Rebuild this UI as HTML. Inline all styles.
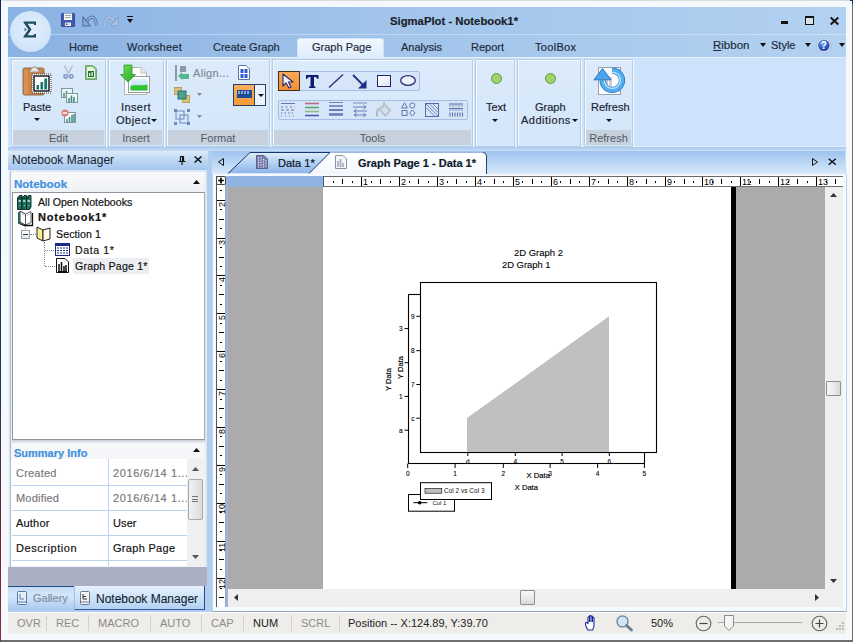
<!DOCTYPE html>
<html><head><meta charset="utf-8">
<style>
*{margin:0;padding:0;box-sizing:border-box}
html,body{width:853px;height:642px;overflow:hidden;background:#6f6f72}
body{position:relative;font-family:"Liberation Sans",sans-serif;font-size:11px;color:#1e2a3a}
.a{position:absolute}
.t{position:absolute;white-space:nowrap;line-height:1;-webkit-text-stroke:0.18px currentColor}
svg{position:absolute;overflow:visible}
#frame{left:1px;top:1px;width:851px;height:639px;background:#f5f8fc}
#title{left:8px;top:7px;width:838px;height:50px;background:linear-gradient(90deg,#8ab2e2 0%,#a2c4eb 45%,#abcbee 75%,#b3d1f1 100%)}
#ribbon{left:8px;top:57px;width:838px;height:90px;background:#cce3fb;border-top:1px solid #e4f0fc;border-bottom:1px solid #e4f0fc}
.grp{position:absolute;top:59px;height:88px;background:linear-gradient(#dcebfb,#d3e6fa);border:1px solid #b6cde8;box-shadow:inset 1px 1px 0 #f4f9ff,1px 1px 0 #f2f8fe}
.glab{position:absolute;left:1px;right:1px;bottom:1px;height:15px;background:#c6d1dd;color:#4f5963;font-size:11px;text-align:center;line-height:17px}
.bt{position:absolute;white-space:nowrap;line-height:1;font-size:11px;color:#1b2533;-webkit-text-stroke:0.18px currentColor}
#left{left:8px;top:147px;width:205px;height:465px;background:#b3cdee}
#doc{left:212px;top:151px;width:634px;height:460px;background:#c8daf0}
#status{left:8px;top:612px;width:838px;height:22px;background:#efedea;border-top:1px solid #fbfbfb}
.sl{position:absolute;top:615px;width:1px;height:16px;background:#d3d1cd}
.st{position:absolute;top:618px;font-size:11px;color:#8a8a8a;white-space:nowrap;line-height:1}
</style></head><body>
<div class="a" style="left:0;top:0;width:853px;height:1px;background:#d9dadd"></div>
<div class="a" style="left:0;top:0;width:1px;height:642px;background:linear-gradient(#0f2a50,#12365e 40%,#163b5a 60%,#7a2233 85%,#8a2a35)"></div>
<div class="a" style="left:850px;top:0;width:3px;height:4px;background:#1a3560"></div>
<div class="a" id="frame"></div>
<div class="a" id="title"></div>
<div class="a" style="left:8px;top:34px;width:838px;height:1px;background:rgba(255,255,255,.35)"></div>

<!-- Sigma orb -->
<div class="a" style="left:10px;top:11px;width:41px;height:41px;border-radius:50%;background:radial-gradient(circle at 50% 45%,#e3effc 0%,#d3e6fa 60%,#c3dbf5 100%)"></div>
<svg style="left:23px;top:21px" width="14" height="17" viewBox="0 0 14 17"><path d="M0.5 0.5 H13 V4 H11 V2.8 H4.5 L8.5 8.5 L4.5 14.2 H11 V13 H13 V16.5 H0.5 V15.5 L5.5 8.5 L0.5 1.5Z" fill="#1e4d5a"/><path d="M1.5 6.5 L4.2 8.5 L1.5 10.5Z" fill="#3a8aa0"/></svg>

<!-- QAT -->
<svg style="left:61px;top:13px" width="14" height="14" viewBox="0 0 14 14"><rect x="0" y="0" width="14" height="14" rx="1.5" fill="#3a4a9e"/><rect x="1" y="0.5" width="12" height="13" rx="1" fill="#4558b0"/><rect x="3" y="0.5" width="8" height="6.5" fill="#f6f6f6"/><path d="M4 2.5 H10 M4 4.5 H10" stroke="#9aa"/><rect x="4" y="9.5" width="6" height="3.5" fill="#e9ecf4"/><rect x="5" y="10.5" width="1.5" height="1.5" fill="#445"/></svg>
<svg style="left:82px;top:14px" width="16" height="13" viewBox="0 0 16 13"><path d="M4.5 8.5 C7 1.5,13.5 0,14.5 11.5" fill="none" stroke="#5878ae" stroke-width="3.2"/><path d="M4.5 8.5 C7 1.5,13.5 0,14.5 11.5" fill="none" stroke="#9fb8dc" stroke-width="1.2"/><path d="M0.8 3 L0.8 11.8 L8.5 11.8Z" fill="#8faad4" stroke="#5878ae" stroke-width="1.2" stroke-linejoin="round"/></svg>
<svg style="left:103px;top:14px" width="16" height="13" viewBox="0 0 16 13"><path d="M11.5 8.5 C9 1.5,2.5 0,1.5 11.5" fill="none" stroke="#8aa6d0" stroke-width="3.2"/><path d="M11.5 8.5 C9 1.5,2.5 0,1.5 11.5" fill="none" stroke="#b5cbe8" stroke-width="1.2"/><path d="M15.2 3 L15.2 11.8 L7.5 11.8Z" fill="#adc3e3" stroke="#8aa6d0" stroke-width="1.2" stroke-linejoin="round"/></svg>
<svg style="left:127px;top:16px" width="6" height="7" viewBox="0 0 6 7"><rect x="0" y="0" width="6" height="1" fill="#111"/><path d="M0 3 L6 3 L3 7 Z" fill="#111"/></svg>

<div class="t" style="left:390px;top:16px;font-weight:bold;font-size:11.3px;color:#1a1f2a">SigmaPlot - Notebook1*</div>

<!-- window buttons -->
<div class="a" style="left:781px;top:21px;width:7px;height:3px;background:#111"></div>
<div class="a" style="left:805px;top:16px;width:9px;height:9px;border:1px solid #111;border-top-width:2px;background:#d9e2ea"></div>
<svg style="left:830px;top:17px" width="9" height="8" viewBox="0 0 9 8"><path d="M0.7 0.5 L8.3 7.5 M8.3 0.5 L0.7 7.5" stroke="#111" stroke-width="1.9"/></svg>

<!-- tabs -->
<div class="a" style="left:297px;top:38px;width:87px;height:20px;background:linear-gradient(#f1f8fe,#dcecfc);border:1px solid #cfe2f6;border-bottom:none;border-radius:3px 3px 0 0"></div>
<div class="t" style="left:69px;top:42px">Home</div>
<div class="t" style="left:127px;top:42px;letter-spacing:0.3px">Worksheet</div>
<div class="t" style="left:213px;top:42px">Create Graph</div>
<div class="t" style="left:312px;top:42px">Graph Page</div>
<div class="t" style="left:401px;top:42px">Analysis</div>
<div class="t" style="left:471px;top:42px">Report</div>
<div class="t" style="left:535px;top:42px;letter-spacing:0.3px">ToolBox</div>
<div class="t" style="left:713px;top:40px;font-size:11.5px;"><u>R</u>ibbon</div>
<svg style="left:760px;top:43px" width="6" height="4"><path d="M0 0 L6 0 L3 4Z" fill="#111"/></svg>
<div class="t" style="left:771px;top:40px;font-size:11px;">Style</div>
<svg style="left:805px;top:43px" width="6" height="4"><path d="M0 0 L6 0 L3 4Z" fill="#111"/></svg>
<svg style="left:816px;top:38px" width="16" height="16" viewBox="0 0 16 16"><defs><radialGradient id="hg" cx="0.4" cy="0.3" r="0.7"><stop offset="0" stop-color="#7fb0f0"/><stop offset="0.6" stop-color="#2f62c8"/><stop offset="1" stop-color="#1d3f9a"/></radialGradient></defs><circle cx="7.8" cy="7.3" r="7.2" fill="#e8f0fa" stroke="#9fb3d0" stroke-width="0.8"/><circle cx="7.8" cy="7.3" r="5.8" fill="url(#hg)"/><text x="7.8" y="11" font-family="Liberation Sans" font-weight="bold" font-size="10" fill="#fff" text-anchor="middle">?</text></svg>
<svg style="left:839px;top:43px" width="6" height="4"><path d="M0 0 L6 0 L3 4Z" fill="#111"/></svg>

<div class="a" id="ribbon"></div>
<!-- Edit group -->
<div class="grp" style="left:11px;width:95px"><div class="glab">Edit</div></div>
<svg style="left:22px;top:66px" width="30" height="30" viewBox="0 0 30 30">
<rect x="1" y="2" width="21" height="27" rx="1.5" fill="#cd8445" stroke="#8d6a52"/>
<rect x="2" y="4" width="4" height="24" fill="#de9a5a" opacity="0.6"/>
<path d="M7 6 L11 1 L14 1 L18 6Z" fill="#e9e6e2" stroke="#9a8f88"/>
<rect x="10" y="8" width="19" height="19" fill="#fff" stroke="#333" stroke-dasharray="1 1"/>
<rect x="12" y="10" width="15" height="15" fill="#fff" stroke="#111" stroke-width="1.4"/>
<rect x="14.5" y="19" width="2.5" height="4.5" fill="#17776c"/><rect x="18.5" y="16" width="2.6" height="7.5" fill="#17776c"/><rect x="22.3" y="12.5" width="2.8" height="11" fill="#17776c"/>
</svg>
<div class="bt" style="left:23px;top:102px">Paste</div>
<svg style="left:34px;top:118px" width="6" height="3"><path d="M0 0 L6 0 L3 3Z" fill="#111"/></svg>
<svg style="left:62px;top:65px" width="13" height="15" viewBox="0 0 13 15"><path d="M2.5 0.5 L6.5 8.5 M10.5 0.5 L6.5 8.5" stroke="#b4bfd6" stroke-width="1.6"/><circle cx="3.8" cy="11.3" r="2.6" fill="#8c9dcc"/><circle cx="9.2" cy="11.3" r="2.6" fill="#8c9dcc"/><circle cx="3.8" cy="11.3" r="1" fill="#c9d3ec"/><circle cx="9.2" cy="11.3" r="1" fill="#c9d3ec"/></svg>
<svg style="left:85px;top:65px" width="12" height="15" viewBox="0 0 12 15"><path d="M0.5 0.5 L8 0.5 L11.5 4 L11.5 14.5 L0.5 14.5Z" fill="#7fc47a" stroke="#2f7a33" stroke-dasharray="1 1"/><path d="M2 2 L7.5 2 L10 4.5 L10 13 L2 13Z" fill="#e6f4e0"/><rect x="3" y="6" width="6" height="6" fill="#2f6a3f"/><rect x="4" y="8" width="1.3" height="3" fill="#dfe"/><rect x="6.5" y="7" width="1.3" height="4" fill="#dfe"/></svg>
<svg style="left:61px;top:88px" width="17" height="15" viewBox="0 0 17 15"><rect x="0.5" y="0.5" width="11" height="9" fill="#e8f2fa" stroke="#7c9a98"/><path d="M3 9 V5 M5.5 9 V3 M8 9 V6" stroke="#4e8f88" stroke-width="1.5"/><rect x="5.5" y="5.5" width="11" height="9" fill="#f4f9fd" stroke="#7c9a98"/><path d="M8 14 V10 M10.5 14 V7.5 M13 14 V9" stroke="#3f8a82" stroke-width="1.6"/></svg>
<svg style="left:61px;top:109px" width="15" height="14" viewBox="0 0 15 14"><rect x="3.5" y="3.5" width="11" height="10" fill="#f4f9fd" stroke="#7c9a98"/><path d="M6 13 V10 M8.5 13 V8 M11 13 V6 M13 13 V5" stroke="#3f8a82" stroke-width="1.5"/><circle cx="4" cy="4" r="3.6" fill="#e07b7b"/><rect x="1.8" y="3.3" width="4.4" height="1.5" fill="#fff"/></svg>

<!-- Insert group -->
<div class="grp" style="left:108px;width:56px"><div class="glab">Insert</div></div>
<svg style="left:120px;top:64px" width="31" height="31" viewBox="0 0 31 31">
<defs><linearGradient id="sky" x1="0" y1="0" x2="0" y2="1"><stop offset="0" stop-color="#e4f4fc"/><stop offset="1" stop-color="#a9daf2"/></linearGradient><linearGradient id="arr" x1="0" y1="0" x2="1" y2="1"><stop offset="0" stop-color="#6ee05a"/><stop offset="1" stop-color="#28a82a"/></linearGradient></defs>
<path d="M4.5 3.5 L21 3.5 L26.5 9 L26.5 30.5 L4.5 30.5Z" fill="#fbfbfb" stroke="#b5b5b5"/>
<path d="M21 3.5 L21 9 L26.5 9" fill="#e8e8e8" stroke="#c5c5c5"/>
<rect x="8.5" y="12.5" width="21" height="16" fill="#fff" stroke="#9c9c9c"/>
<rect x="10.5" y="14.5" width="17" height="12" fill="url(#sky)"/>
<path d="M10.5 22 C15 20.5,22 22,27.5 20.5 L27.5 26.5 L10.5 26.5Z" fill="#2fc432"/>
<path d="M4 1 L12 1 L12 10.5 L15.5 10.5 L8 18 L0.5 10.5 L4 10.5Z" fill="url(#arr)" stroke="#2f9a27" stroke-width="0.8"/>
</svg>
<div class="bt" style="left:121px;top:102px;letter-spacing:0.4px">Insert</div>
<div class="bt" style="left:116px;top:115px;letter-spacing:0.5px">Object</div>
<svg style="left:151px;top:119px" width="5" height="3"><path d="M0 0 L6 0 L3 3Z" fill="#111"/></svg>

<!-- Format group -->
<div class="grp" style="left:166px;width:104px"><div class="glab">Format</div></div>
<svg style="left:175px;top:65px" width="15" height="16" viewBox="0 0 15 16"><path d="M1 0 L1 16" stroke="#6a7f90" stroke-width="1.5"/><rect x="5" y="1" width="6" height="6" fill="#8a98a8"/><path d="M3 11 L7 7 L7 9 L14 9 L14 14 L7 14 L7 15Z" fill="#55b78b"/></svg>
<div class="bt" style="left:193px;top:68px;color:#7f8a97;letter-spacing:0.3px">Align...</div>
<svg style="left:238px;top:65px" width="12" height="15" viewBox="0 0 12 15"><path d="M0.5 0.5 L8 0.5 L11.5 4 L11.5 14.5 L0.5 14.5Z" fill="#fff" stroke="#5a6fa8"/><rect x="2.5" y="4" width="3" height="4" fill="#2f5bd0"/><rect x="6.5" y="4" width="3" height="4" fill="#2f5bd0"/><rect x="2.5" y="9" width="3" height="4" fill="#2f5bd0"/><rect x="6.5" y="9" width="3" height="4" fill="#2f5bd0"/></svg>
<svg style="left:174px;top:87px" width="16" height="16" viewBox="0 0 16 16"><rect x="0.5" y="0.5" width="7" height="7" fill="#d9c47a" stroke="#b5a35a"/><rect x="8.5" y="8.5" width="7" height="7" fill="#d9c47a" stroke="#b5a35a"/><rect x="4" y="4" width="8" height="8" fill="#4f9f8f" stroke="#2f6f6f"/></svg>
<svg style="left:197px;top:93px" width="5" height="3"><path d="M0 0 L5 0 L2.5 3Z" fill="#7d8a9a"/></svg>
<svg style="left:174px;top:109px" width="16" height="16" viewBox="0 0 16 16"><rect x="2" y="2" width="8" height="8" fill="none" stroke="#6f86b8"/><rect x="6" y="6" width="8" height="8" fill="none" stroke="#6f86b8"/><rect x="0" y="0" width="3" height="3" fill="#6f86b8"/><rect x="13" y="0" width="3" height="3" fill="#6f86b8"/><rect x="0" y="13" width="3" height="3" fill="#6f86b8"/><rect x="13" y="13" width="3" height="3" fill="#6f86b8"/></svg>
<svg style="left:197px;top:115px" width="5" height="3"><path d="M0 0 L5 0 L2.5 3Z" fill="#7d8a9a"/></svg>
<div class="a" style="left:233px;top:84px;width:33px;height:22px;border:1px solid #2e3f66;background:#eaf2fb"></div>
<div class="a" style="left:234px;top:85px;width:21px;height:20px;background:linear-gradient(#f7b060,#f59a3a);border-right:1px solid #2e3f66"></div>
<svg style="left:237px;top:90px" width="15" height="9" viewBox="0 0 15 9"><rect x="0" y="0" width="15" height="8" fill="#1b4d9a"/><path d="M2 1 L2 4 M5 1 L5 4 M8 1 L8 4 M11 1 L11 4" stroke="#fff" stroke-width="1"/></svg>
<svg style="left:258px;top:94px" width="6" height="3"><path d="M0 0 L6 0 L3 3Z" fill="#111"/></svg>

<!-- Tools group -->
<div class="grp" style="left:272px;width:201px"><div class="glab">Tools</div></div>
<div class="a" style="left:278px;top:71px;width:142px;height:20px;border:1px solid #a5bde0;border-radius:2px;background:#d6e6f8"></div>
<div class="a" style="left:278px;top:71px;width:22px;height:20px;border:1px solid #3a3020;background:linear-gradient(#f7a958,#f59032)"></div>
<svg style="left:282px;top:73px" width="13" height="16" viewBox="0 0 13 16"><path d="M1 1 L1 13 L4 10 L7 15 L9 14 L6.5 9 L11 9Z" fill="#f4f4ff" stroke="#2a2f7a" stroke-width="1.2" stroke-linejoin="round"/></svg>
<svg style="left:306px;top:75px" width="13" height="13" viewBox="0 0 13 13"><path d="M0 0 H12.5 V4 H11.5 Q11 2,9 2 H8 V11 Q8 11.8,9.5 11.8 V13 H3 V11.8 Q4.5 11.8,4.5 11 V2 H3.5 Q1.5 2,1 4 H0Z" fill="#0f1c70"/></svg>
<svg style="left:328px;top:74px" width="16" height="14" viewBox="0 0 16 14"><path d="M1 13.5 L15 0.5" stroke="#2a3b7a" stroke-width="1.5"/></svg>
<svg style="left:352px;top:74px" width="15" height="15" viewBox="0 0 15 15"><path d="M1 1 L12 12" stroke="#1f2f8a" stroke-width="1.8"/><path d="M14.5 6 L14.5 14.5 L6 14.5Z" fill="#1f2f8a"/></svg>
<div class="a" style="left:377px;top:75px;width:14px;height:12px;border:1.5px solid #1e2a6a;background:linear-gradient(135deg,#fff,#dfe3f0)"></div>
<svg style="left:400px;top:75px" width="16" height="11" viewBox="0 0 16 11"><ellipse cx="8" cy="5.5" rx="7.3" ry="4.8" fill="#eef0fb" stroke="#2a3070" stroke-width="1.3"/></svg>

<div class="a" style="left:278px;top:100px;width:190px;height:20px;border:1px solid #a5bde0;border-radius:2px;background:#d6e6f8"></div>
<svg style="left:281px;top:102px" width="14" height="15" viewBox="0 0 14 15"><path d="M0 1.5 H14" stroke="#5a6aa8" stroke-width="0.9"/><path d="M0 5 H14" stroke="#5a6aa8" stroke-width="0.9" stroke-dasharray="2 2.5"/><path d="M0 8 H14" stroke="#5a6aa8" stroke-width="0.9" stroke-dasharray="3 2"/><path d="M0 11 H14" stroke="#5a6aa8" stroke-width="0.9" stroke-dasharray="1.5 2"/><path d="M0 14 H14" stroke="#5a6aa8" stroke-width="0.9" stroke-dasharray="1 3"/></svg>
<svg style="left:305px;top:102px" width="14" height="15" viewBox="0 0 14 15"><path d="M0 1.5 H14" stroke="#b86a80" stroke-width="1.6"/><path d="M0 5.5 H14" stroke="#5da86a" stroke-width="1.6"/><path d="M0 9.5 H14" stroke="#8cc088" stroke-width="1.6"/><path d="M0 13.5 H14" stroke="#4a5ab0" stroke-width="1.6"/></svg>
<svg style="left:329px;top:102px" width="14" height="15" viewBox="0 0 14 15"><path d="M0 0.5 H14" stroke="#5a6aa8" stroke-width="0.8"/><path d="M0 4 H14" stroke="#6c7cbc" stroke-width="1.6"/><path d="M0 8 H14" stroke="#6c7cbc" stroke-width="2"/><path d="M0 12.5 H14" stroke="#6c7cbc" stroke-width="2.6"/></svg>
<svg style="left:353px;top:102px" width="14" height="15" viewBox="0 0 14 15"><path d="M0 1 H14" stroke="#6070b0" stroke-width="0.8"/><path d="M0 5 H13 M10.5 3 L13 5 L10.5 7" stroke="#6070b0" stroke-width="0.9" fill="none"/><path d="M1 9 H14 M3.5 7 L1 9 L3.5 11" stroke="#6070b0" stroke-width="0.9" fill="none"/><path d="M1 13 H13 M3.5 11.3 L1 13 L3.5 14.7 M10.5 11.3 L13 13 L10.5 14.7" stroke="#6070b0" stroke-width="0.9" fill="none"/></svg>
<svg style="left:376px;top:101px" width="16" height="17" viewBox="0 0 16 17"><path d="M8 0.5 V6" stroke="#8fa6b8" stroke-width="1"/><path d="M2.5 8 L8.5 3 L15 9 L9.5 15.5Z" fill="#c0cbd6" stroke="#a7b4c2" stroke-width="0.9"/><path d="M5 9 L9 6 L12.5 9.5 L9.5 13Z" fill="#d8e0e8"/><path d="M2.5 8 C0.5 10,0.8 13,1.5 15.5" stroke="#a9b8c4" stroke-width="1.8" fill="none"/></svg>
<svg style="left:401px;top:102px" width="15" height="15" viewBox="0 0 15 15"><path d="M3.5 0.8 L6.3 6 L0.7 6Z" fill="none" stroke="#5a6aa8" stroke-width="0.9"/><circle cx="11.3" cy="3.5" r="2.6" fill="none" stroke="#5a6aa8" stroke-width="0.9"/><rect x="1" y="8.5" width="5" height="5" fill="none" stroke="#5a6aa8" stroke-width="0.9"/><path d="M11.3 8 L14 11 L11.3 14 L8.6 11Z" fill="none" stroke="#5a6aa8" stroke-width="0.9"/></svg>
<svg style="left:425px;top:103px" width="14" height="14" viewBox="0 0 14 14"><rect x="0.5" y="0.5" width="13" height="13" fill="none" stroke="#5a6aa8"/><path d="M1 4.5 L9.5 13 M1 1 L13 13 M4.5 1 L13 9.5 M8 1 L13 6" stroke="#6a7ab0" stroke-width="0.9"/></svg>
<svg style="left:449px;top:103px" width="14" height="14" viewBox="0 0 14 14"><path d="M0 1 H14 M0 5.5 H14" stroke="#5a6aa8" stroke-width="1"/><path d="M1 2 V3.5 M4 2 V3.5 M7 2 V3.5 M10 2 V3.5 M13 2 V3.5 M1 6.5 V8 M4 6.5 V8 M7 6.5 V8 M10 6.5 V8 M13 6.5 V8" stroke="#5a6aa8" stroke-width="0.9"/><path d="M1 9.5 V13.5 M3.5 9.5 V13.5 M6 9.5 V13.5 M8.5 9.5 V13.5 M11 9.5 V13.5 M13.5 9.5 V13.5" stroke="#6070b0" stroke-width="1.1"/></svg>

<!-- Text group -->
<div class="grp" style="left:475px;width:40px"></div>
<div class="a" style="left:491px;top:73px;width:11px;height:11px;border-radius:50%;background:#9fd36f;border:1px solid #5f9a3a"></div>
<div class="bt" style="left:486px;top:102px">Text</div>
<svg style="left:492px;top:119px" width="6" height="3"><path d="M0 0 L6 0 L3 3Z" fill="#111"/></svg>

<!-- Graph Additions group -->
<div class="grp" style="left:517px;width:64px"></div>
<div class="a" style="left:545px;top:73px;width:11px;height:11px;border-radius:50%;background:#9fd36f;border:1px solid #5f9a3a"></div>
<div class="bt" style="left:535px;top:102px">Graph</div>
<div class="bt" style="left:521px;top:115px;letter-spacing:0.5px">Additions</div>
<svg style="left:572px;top:119px" width="6" height="3"><path d="M0 0 L6 0 L3 3Z" fill="#111"/></svg>

<!-- Refresh group -->
<div class="grp" style="left:584px;width:49px"><div class="glab">Refresh</div></div>
<svg style="left:592px;top:64px" width="34" height="32" viewBox="0 0 34 32">
<rect x="6.5" y="3.5" width="22" height="27" fill="#fbfcfe" stroke="#9aa3ad"/>
<rect x="13" y="15" width="3" height="8" fill="#c9c4d4"/><rect x="17" y="13" width="3" height="10" fill="#d8c8d0"/>
<path d="M20.3 6.6 A9.7 9.7 0 1 1 10.6 16.3" fill="none" stroke="#2c78c4" stroke-width="6.2"/>
<path d="M20.3 6.6 A9.7 9.7 0 1 1 10.6 16.3" fill="none" stroke="#52aef0" stroke-width="4.6"/>
<path d="M20.3 8.2 A8.1 8.1 0 1 1 12.2 16.3" fill="none" stroke="#b8e6fb" stroke-width="1.4"/>
<path d="M10.5 4.5 L2 15.8 L19 15.8Z" fill="#4aa6ea" stroke="#2c78c4" stroke-width="1"/>
</svg>
<div class="bt" style="left:591px;top:102px">Refresh</div>
<svg style="left:606px;top:119px" width="6" height="3"><path d="M0 0 L6 0 L3 3Z" fill="#111"/></svg>
<div class="a" id="left"></div>
<div class="a" style="left:8px;top:147px;width:838px;height:4px;background:linear-gradient(#a9c9ef,#c9ddf4)"></div>
<!-- Notebook manager header -->
<div class="a" style="left:8px;top:151px;width:200px;height:19px;background:linear-gradient(#dcebfa,#b9d5f3 55%,#a4c6ef)"></div>
<div class="t" style="left:12px;top:154px;font-size:12px;color:#1a2230;-webkit-text-stroke:0">Notebook Manager</div>
<svg style="left:178px;top:156px" width="8" height="9" viewBox="0 0 8 9"><path d="M2 0.5 L6 0.5 M2.5 0.5 L2.5 5 M5.5 0.5 L5.5 5 M0.5 5.5 L7.5 5.5 M4 5.5 L4 9" stroke="#111" stroke-width="1.2"/><rect x="4" y="1" width="1.5" height="4.5" fill="#111"/></svg>
<svg style="left:194px;top:156px" width="8" height="7" viewBox="0 0 8 7"><path d="M0.6 0.5 L7.4 6.5 M7.4 0.5 L0.6 6.5" stroke="#111" stroke-width="1.6"/></svg>
<!-- panel body -->
<div class="a" style="left:8px;top:170px;width:199px;height:416px;background:#dfe7f1;border-left:1px solid #eef3f9"></div>
<div class="a" style="left:10px;top:172px;width:1px;height:395px;background:#a9bdd3"></div>
<div class="a" style="left:11px;top:172px;width:194px;height:270px;background:linear-gradient(#fafbfc,#eef1f5 20px,#f2f4f7);border-top-left-radius:3px"></div>
<div class="t" style="left:14px;top:179px;font-weight:bold;font-size:11.5px;color:#3e90dc">Notebook</div>
<svg style="left:193px;top:180px" width="7" height="4"><path d="M0 4 L7 4 L3.5 0Z" fill="#111"/></svg>
<div class="a" style="left:12px;top:192px;width:193px;height:248px;background:#fff;border:1px solid #8e959e;border-right-color:#a9afb6;border-bottom-color:#8e959e"></div>
<div class="a" style="left:12px;top:440px;width:193px;height:2px;background:linear-gradient(#c4c8ce,#e6e9ee)"></div>
<!-- tree -->
<svg style="left:17px;top:195px" width="15" height="15" viewBox="0 0 15 15"><g stroke="#0b2622" stroke-width="0.9"><path d="M0.5 3 L2.5 0.5 L5 0.5 L5 14.5 L0.5 14.5Z" fill="#1d6f62"/><path d="M5 3 L7 0.5 L9.5 0.5 L9.5 14.5 L5 14.5Z" fill="#1d6f62"/><path d="M9.5 3 L11.5 0.5 L14 0.5 L14 12 L12.5 14.5 L9.5 14.5Z" fill="#1d6f62"/></g><path d="M1.5 6 H4 M6 6 H8.5 M10.5 6 H13" stroke="#cfeee6" stroke-width="1.6"/><path d="M2.5 10.5 H3.2 M7 10.5 H7.7 M11.5 10.5 H12.2" stroke="#bfe" stroke-width="1"/><path d="M0.5 3 H12" stroke="#0b2622" stroke-width="0.8"/></svg>
<div class="t" style="left:38px;top:197px;font-size:10.6px;color:#111">All Open Notebooks</div>
<svg style="left:18px;top:210px" width="16" height="16" viewBox="0 0 16 16"><path d="M2 1 L7.5 4 L7.5 15 L2 12Z" fill="#fff" stroke="#222" stroke-width="0.9"/><path d="M7.5 4 L13 1.5 L13 12.5 L7.5 15Z" fill="#fff" stroke="#555" stroke-width="0.9"/><path d="M4 4 L6.5 5.5 M9 5.5 L12 4" stroke="#c9a0b0" stroke-width="0.8"/><path d="M0.8 2 L0.8 13 L6.5 15.5 L14.5 15.5 L14.5 3" fill="none" stroke="#111" stroke-width="1.3"/><path d="M0.8 2 L0.8 12.5 L3 13.5" fill="none" stroke="#1d6f62" stroke-width="1.6"/></svg>
<div class="t" style="left:38px;top:212px;font-size:11px;font-weight:bold;color:#111;letter-spacing:0.8px">Notebook1*</div>
<div class="a" style="left:25px;top:226px;width:1px;height:5px;border-left:1px dotted #888"></div>
<div class="a" style="left:21px;top:230px;width:9px;height:9px;border:1px solid #98a0a8;background:linear-gradient(#fff,#dfe3e8)"></div>
<div class="a" style="left:23px;top:234px;width:5px;height:1px;background:#333"></div>
<div class="a" style="left:30px;top:234px;width:6px;height:1px;border-top:1px dotted #888"></div>
<svg style="left:36px;top:226px" width="16" height="16" viewBox="0 0 16 16"><path d="M1 1 L7 4 L7 15 L1 12Z" fill="#f6ef9a" stroke="#222"/><path d="M7 4 L14 2 L14 13 L7 15Z" fill="#fffbe0" stroke="#222"/></svg>
<div class="t" style="left:56px;top:229px;font-size:10.6px;color:#111;letter-spacing:0.1px">Section 1</div>
<div class="a" style="left:44px;top:242px;width:1px;height:24px;border-left:1px dotted #888"></div>
<div class="a" style="left:45px;top:250px;width:9px;height:1px;border-top:1px dotted #888"></div>
<div class="a" style="left:45px;top:266px;width:10px;height:1px;border-top:1px dotted #888"></div>
<svg style="left:55px;top:243px" width="15" height="13" viewBox="0 0 15 13"><rect x="0.5" y="0.5" width="14" height="12" fill="#fff" stroke="#1a2a8a"/><rect x="0.5" y="0.5" width="14" height="2.5" fill="#1a2a8a"/><path d="M2 5 L13 5 M2 7.5 L13 7.5 M2 10 L13 10" stroke="#1a2a8a" stroke-width="1.2" stroke-dasharray="2 1"/></svg>
<div class="t" style="left:75px;top:245px;font-size:10.6px;color:#111;letter-spacing:0.6px">Data 1*</div>
<div class="a" style="left:73px;top:258px;width:76px;height:16px;background:#eceef2"></div>
<svg style="left:56px;top:258px" width="13" height="15" viewBox="0 0 13 15"><path d="M0.5 0.5 L9 0.5 L12.5 4 L12.5 14.5 L0.5 14.5Z" fill="#fff" stroke="#111"/><path d="M3 13 L3 6 M5.5 13 L5.5 4 M8 13 L8 8 M10 13 L10 7" stroke="#111" stroke-width="1.5"/><path d="M2 13.5 L11 13.5" stroke="#111"/></svg>
<div class="t" style="left:75px;top:261px;font-size:10.6px;color:#111;letter-spacing:0.2px">Graph Page 1*</div>

<!-- summary info -->
<div class="a" style="left:11px;top:443px;width:194px;height:124px;background:linear-gradient(#f6f7f9,#eef0f3);border-top-left-radius:3px"></div>
<div class="t" style="left:14px;top:448px;font-weight:bold;font-size:11px;color:#3e90dc">Summary Info</div>
<svg style="left:193px;top:448px" width="7" height="4"><path d="M0 4 L7 4 L3.5 0Z" fill="#111"/></svg>
<div class="a" style="left:11px;top:459px;width:176px;height:107px;background:#fff"></div>
<div class="a" style="left:108px;top:459px;width:1px;height:107px;background:#b9d4ee"></div>
<div class="a" style="left:12px;top:485px;width:175px;height:1px;background:#b9d4ee"></div>
<div class="a" style="left:12px;top:510px;width:175px;height:1px;background:#b9d4ee"></div>
<div class="a" style="left:12px;top:535px;width:175px;height:1px;background:#b9d4ee"></div>
<div class="a" style="left:12px;top:560px;width:175px;height:1px;background:#b9d4ee"></div>
<div class="t" style="left:16px;top:468px;color:#7a7a7a;letter-spacing:0.2px">Created</div>
<div class="t" style="left:113px;top:468px;letter-spacing:0.6px;color:#7a7a7a">2016/6/14 1...</div>
<div class="t" style="left:16px;top:493px;color:#7a7a7a;letter-spacing:0.2px">Modified</div>
<div class="t" style="left:113px;top:493px;letter-spacing:0.6px;color:#7a7a7a">2016/6/14 1...</div>
<div class="t" style="left:16px;top:518px;color:#111;letter-spacing:0.2px">Author</div>
<div class="t" style="left:113px;top:518px;letter-spacing:0.1px;color:#111">User</div>
<div class="t" style="left:16px;top:543px;color:#111;letter-spacing:0.55px">Description</div>
<div class="t" style="left:113px;top:543px;letter-spacing:0.3px;color:#111">Graph Page</div>
<!-- scrollbar -->
<div class="a" style="left:187px;top:459px;width:17px;height:107px;background:#f0f0f0"></div>
<svg style="left:192px;top:467px" width="7" height="4"><path d="M0 4 L7 4 L3.5 0Z" fill="#555"/></svg>
<div class="a" style="left:188px;top:479px;width:15px;height:41px;border:1px solid #a8a8a8;border-radius:2px;background:linear-gradient(90deg,#f2f2f2,#dcdcdc)"></div>
<div class="a" style="left:192px;top:496px;width:6px;height:6px;border-top:1px solid #777;border-bottom:1px solid #777"></div>
<div class="a" style="left:192px;top:499px;width:6px;height:1px;background:#777"></div>
<svg style="left:192px;top:555px" width="7" height="4"><path d="M0 0 L7 0 L3.5 4Z" fill="#555"/></svg>
<div class="a" style="left:8px;top:567px;width:199px;height:19px;background:#abafc4"></div>
<!-- bottom tabs -->
<div class="a" style="left:8px;top:586px;width:66px;height:24px;background:linear-gradient(#c6ddf6,#d5e6f9 40%,#a9c8ee);border-top:1px solid #1d4c8f"></div>
<svg style="left:17px;top:591px" width="10" height="14" viewBox="0 0 10 14"><rect x="0.5" y="0.5" width="9" height="13" rx="1" fill="#e8eef6" stroke="#5878a8"/><path d="M3 3 L3 8 L7 8" stroke="#5878a8" fill="none"/><path d="M1 11 L9 11" stroke="#5878a8"/></svg>
<div class="t" style="left:33px;top:593px;font-size:11px;color:#7d8fa6">Gallery</div>
<div class="a" style="left:74px;top:586px;width:131px;height:24px;background:linear-gradient(#e4f0fc,#cfe3f8 50%,#b3d1f3);border-right:1px solid #1f4a86;border-bottom:1px solid #2a5c9e;border-left:1px solid #9fc0e8"></div>
<svg style="left:80px;top:591px" width="10" height="14" viewBox="0 0 10 14"><rect x="0.5" y="0.5" width="9" height="13" rx="1" fill="#f3f3f3" stroke="#6b7b8b"/><path d="M3 3 L3 8 L7 8 M3 5.5 L6 5.5" stroke="#333" fill="none"/><path d="M1 11 L9 11" stroke="#6b7b8b"/></svg>
<div class="t" style="left:96px;top:593px;font-size:12px;color:#111a28;-webkit-text-stroke:0.08px currentColor">Notebook Manager</div>
<div class="a" id="doc"></div>
<!-- doc tab bar -->
<div class="a" style="left:212px;top:151px;width:633px;height:23px;background:linear-gradient(#a0c4ef,#bdd8f6 55%,#d9e9fa)"></div>
<svg style="left:218px;top:158px" width="6" height="8" viewBox="0 0 6 8"><path d="M5.5 0.5 L0.5 4 L5.5 7.5Z" fill="none" stroke="#111"/></svg>
<svg style="left:220px;top:150px" width="280" height="25" viewBox="0 0 280 25"><defs><linearGradient id="tg1" x1="0" y1="0" x2="0" y2="1"><stop offset="0" stop-color="#e3eefa"/><stop offset="0.45" stop-color="#b9d5f4"/><stop offset="1" stop-color="#8db6e8"/></linearGradient><linearGradient id="tg2" x1="0" y1="0" x2="0" y2="1"><stop offset="0" stop-color="#ffffff"/><stop offset="1" stop-color="#f2f7fc"/></linearGradient></defs>
<path d="M8 23 L30 2 L110 2 L89 23Z" fill="url(#tg1)"/>
<path d="M8 23.5 L30 2.5 L110 2.5" fill="none" stroke="#18376e" stroke-width="1"/>
<path d="M89 24 L110 2.5 L263 2.5 Q267 2.5 267 6 L267 24Z" fill="url(#tg2)"/>
<path d="M89 23.5 L110 2.5" fill="none" stroke="#18376e" stroke-width="1"/>
<path d="M110 2.5 L263 2.5" fill="none" stroke="#9ab8de" stroke-width="1"/><path d="M263 2.5 Q266.5 2.5 266.5 6 L266.5 24" fill="none" stroke="#1f3f78" stroke-width="1"/>
</svg>
<svg style="left:256px;top:155px" width="12" height="14" viewBox="0 0 12 14"><path d="M0.5 0.5 L8 0.5 L11.5 4 L11.5 13.5 L0.5 13.5Z" fill="#7a82ac" stroke="#5a6290"/><path d="M2.5 2 V12.5 M5 2 V12.5 M7.5 4 V12.5 M10 5 V12.5" stroke="#fff" stroke-width="0.9" stroke-dasharray="1.2 1.3"/></svg>
<div class="t" style="left:278px;top:158px;font-size:11px;color:#0a1422">Data 1*</div>

<svg style="left:335px;top:155px" width="12" height="14" viewBox="0 0 12 14"><path d="M0.5 0.5 L8 0.5 L11.5 4 L11.5 13.5 L0.5 13.5Z" fill="#f4f6fa" stroke="#8a92a8"/><path d="M3 12 L3 6 M5.5 12 L5.5 4 M8 12 L8 8" stroke="#a0a8c0" stroke-width="1.6"/></svg>
<div class="t" style="left:358px;top:158px;font-size:11px;font-weight:bold;color:#0f1a2a">Graph Page 1 - Data 1*</div>
<svg style="left:812px;top:158px" width="6" height="8" viewBox="0 0 6 8"><path d="M0.5 0.5 L5.5 4 L0.5 7.5Z" fill="none" stroke="#111"/></svg>
<svg style="left:828px;top:158px" width="9" height="8" viewBox="0 0 9 8"><path d="M0.7 0.7 L7.8 6.8 M7.8 0.7 L0.7 6.8" stroke="#111" stroke-width="1.4"/></svg>
<!-- rulers -->
<div class="a" style="left:212px;top:174px;width:635px;height:438px;background:#f6f9fd;border-left:1px solid #b9d3f0;border-right:1px solid #b6cfea;border-bottom:1px solid #95a3b5"></div>
<div class="a" style="left:226px;top:176px;width:3px;height:431px;background:#9db6d6"></div>
<div class="a" style="left:227px;top:176px;width:97px;height:11px;background:#8fb4e2"></div>
<div class="a" id="hrul" style="left:323px;top:176px;width:520px;height:11px;background:#fff;border-top:1px solid #6a6a6a;border-bottom:1px solid #6f6f6f;border-left:1px solid #4a5a6a"></div>
<div class="a" style="left:216px;top:176px;width:10px;height:431px;background:#fff;border-left:1px solid #555;border-right:1px solid #9aabc0"></div>
<!--RULERS-->
<div class="a" style="left:333px;top:181px;width:1px;height:2px;background:#000"></div>
<div class="a" style="left:342px;top:179px;width:1px;height:5px;background:#000"></div>
<div class="a" style="left:352px;top:181px;width:1px;height:2px;background:#000"></div>
<div class="a" style="left:361px;top:177px;width:1px;height:9px;background:#000"></div>
<div class="a" style="left:371px;top:181px;width:1px;height:2px;background:#000"></div>
<div class="a" style="left:380px;top:179px;width:1px;height:5px;background:#000"></div>
<div class="a" style="left:390px;top:181px;width:1px;height:2px;background:#000"></div>
<div class="a" style="left:399px;top:177px;width:1px;height:9px;background:#000"></div>
<div class="a" style="left:409px;top:181px;width:1px;height:2px;background:#000"></div>
<div class="a" style="left:418px;top:179px;width:1px;height:5px;background:#000"></div>
<div class="a" style="left:428px;top:181px;width:1px;height:2px;background:#000"></div>
<div class="a" style="left:437px;top:177px;width:1px;height:9px;background:#000"></div>
<div class="a" style="left:447px;top:181px;width:1px;height:2px;background:#000"></div>
<div class="a" style="left:456px;top:179px;width:1px;height:5px;background:#000"></div>
<div class="a" style="left:466px;top:181px;width:1px;height:2px;background:#000"></div>
<div class="a" style="left:475px;top:177px;width:1px;height:9px;background:#000"></div>
<div class="a" style="left:484px;top:181px;width:1px;height:2px;background:#000"></div>
<div class="a" style="left:494px;top:179px;width:1px;height:5px;background:#000"></div>
<div class="a" style="left:503px;top:181px;width:1px;height:2px;background:#000"></div>
<div class="a" style="left:513px;top:177px;width:1px;height:9px;background:#000"></div>
<div class="a" style="left:522px;top:181px;width:1px;height:2px;background:#000"></div>
<div class="a" style="left:532px;top:179px;width:1px;height:5px;background:#000"></div>
<div class="a" style="left:541px;top:181px;width:1px;height:2px;background:#000"></div>
<div class="a" style="left:551px;top:177px;width:1px;height:9px;background:#000"></div>
<div class="a" style="left:560px;top:181px;width:1px;height:2px;background:#000"></div>
<div class="a" style="left:570px;top:179px;width:1px;height:5px;background:#000"></div>
<div class="a" style="left:579px;top:181px;width:1px;height:2px;background:#000"></div>
<div class="a" style="left:589px;top:177px;width:1px;height:9px;background:#000"></div>
<div class="a" style="left:598px;top:181px;width:1px;height:2px;background:#000"></div>
<div class="a" style="left:608px;top:179px;width:1px;height:5px;background:#000"></div>
<div class="a" style="left:617px;top:181px;width:1px;height:2px;background:#000"></div>
<div class="a" style="left:627px;top:177px;width:1px;height:9px;background:#000"></div>
<div class="a" style="left:636px;top:181px;width:1px;height:2px;background:#000"></div>
<div class="a" style="left:646px;top:179px;width:1px;height:5px;background:#000"></div>
<div class="a" style="left:655px;top:181px;width:1px;height:2px;background:#000"></div>
<div class="a" style="left:665px;top:177px;width:1px;height:9px;background:#000"></div>
<div class="a" style="left:674px;top:181px;width:1px;height:2px;background:#000"></div>
<div class="a" style="left:684px;top:179px;width:1px;height:5px;background:#000"></div>
<div class="a" style="left:693px;top:181px;width:1px;height:2px;background:#000"></div>
<div class="a" style="left:702px;top:177px;width:1px;height:9px;background:#000"></div>
<div class="a" style="left:712px;top:181px;width:1px;height:2px;background:#000"></div>
<div class="a" style="left:721px;top:179px;width:1px;height:5px;background:#000"></div>
<div class="a" style="left:731px;top:181px;width:1px;height:2px;background:#000"></div>
<div class="a" style="left:740px;top:177px;width:1px;height:9px;background:#000"></div>
<div class="a" style="left:750px;top:181px;width:1px;height:2px;background:#000"></div>
<div class="a" style="left:759px;top:179px;width:1px;height:5px;background:#000"></div>
<div class="a" style="left:769px;top:181px;width:1px;height:2px;background:#000"></div>
<div class="a" style="left:778px;top:177px;width:1px;height:9px;background:#000"></div>
<div class="a" style="left:788px;top:181px;width:1px;height:2px;background:#000"></div>
<div class="a" style="left:797px;top:179px;width:1px;height:5px;background:#000"></div>
<div class="a" style="left:807px;top:181px;width:1px;height:2px;background:#000"></div>
<div class="a" style="left:816px;top:177px;width:1px;height:9px;background:#000"></div>
<div class="a" style="left:826px;top:181px;width:1px;height:2px;background:#000"></div>
<div class="a" style="left:835px;top:179px;width:1px;height:5px;background:#000"></div>
<div class="a" style="left:220px;top:190px;width:2px;height:1px;background:#000"></div>
<div class="a" style="left:217px;top:200px;width:8px;height:1px;background:#000"></div>
<div class="a" style="left:220px;top:209px;width:2px;height:1px;background:#000"></div>
<div class="a" style="left:219px;top:219px;width:5px;height:1px;background:#000"></div>
<div class="a" style="left:220px;top:228px;width:2px;height:1px;background:#000"></div>
<div class="a" style="left:217px;top:238px;width:8px;height:1px;background:#000"></div>
<div class="a" style="left:220px;top:247px;width:2px;height:1px;background:#000"></div>
<div class="a" style="left:219px;top:257px;width:5px;height:1px;background:#000"></div>
<div class="a" style="left:220px;top:266px;width:2px;height:1px;background:#000"></div>
<div class="a" style="left:217px;top:275px;width:8px;height:1px;background:#000"></div>
<div class="a" style="left:220px;top:285px;width:2px;height:1px;background:#000"></div>
<div class="a" style="left:219px;top:294px;width:5px;height:1px;background:#000"></div>
<div class="a" style="left:220px;top:304px;width:2px;height:1px;background:#000"></div>
<div class="a" style="left:217px;top:313px;width:8px;height:1px;background:#000"></div>
<div class="a" style="left:220px;top:323px;width:2px;height:1px;background:#000"></div>
<div class="a" style="left:219px;top:332px;width:5px;height:1px;background:#000"></div>
<div class="a" style="left:220px;top:342px;width:2px;height:1px;background:#000"></div>
<div class="a" style="left:217px;top:351px;width:8px;height:1px;background:#000"></div>
<div class="a" style="left:220px;top:361px;width:2px;height:1px;background:#000"></div>
<div class="a" style="left:219px;top:370px;width:5px;height:1px;background:#000"></div>
<div class="a" style="left:220px;top:380px;width:2px;height:1px;background:#000"></div>
<div class="a" style="left:217px;top:389px;width:8px;height:1px;background:#000"></div>
<div class="a" style="left:220px;top:399px;width:2px;height:1px;background:#000"></div>
<div class="a" style="left:219px;top:408px;width:5px;height:1px;background:#000"></div>
<div class="a" style="left:220px;top:417px;width:2px;height:1px;background:#000"></div>
<div class="a" style="left:217px;top:427px;width:8px;height:1px;background:#000"></div>
<div class="a" style="left:220px;top:436px;width:2px;height:1px;background:#000"></div>
<div class="a" style="left:219px;top:446px;width:5px;height:1px;background:#000"></div>
<div class="a" style="left:220px;top:455px;width:2px;height:1px;background:#000"></div>
<div class="a" style="left:217px;top:465px;width:8px;height:1px;background:#000"></div>
<div class="a" style="left:220px;top:474px;width:2px;height:1px;background:#000"></div>
<div class="a" style="left:219px;top:484px;width:5px;height:1px;background:#000"></div>
<div class="a" style="left:220px;top:493px;width:2px;height:1px;background:#000"></div>
<div class="a" style="left:217px;top:503px;width:8px;height:1px;background:#000"></div>
<div class="a" style="left:220px;top:512px;width:2px;height:1px;background:#000"></div>
<div class="a" style="left:219px;top:522px;width:5px;height:1px;background:#000"></div>
<div class="a" style="left:220px;top:531px;width:2px;height:1px;background:#000"></div>
<div class="a" style="left:217px;top:541px;width:8px;height:1px;background:#000"></div>
<div class="a" style="left:220px;top:550px;width:2px;height:1px;background:#000"></div>
<div class="a" style="left:219px;top:559px;width:5px;height:1px;background:#000"></div>
<div class="a" style="left:220px;top:569px;width:2px;height:1px;background:#000"></div>
<div class="a" style="left:217px;top:578px;width:8px;height:1px;background:#000"></div>
<div class="a" style="left:220px;top:588px;width:2px;height:1px;background:#000"></div>
<div class="a" style="left:219px;top:597px;width:5px;height:1px;background:#000"></div>
<svg style="left:0;top:0" width="853" height="642" font-family="Liberation Sans" font-size="9" fill="#000" stroke="#000" stroke-width="0"><text x="363" y="185">1</text><text x="401" y="185">2</text><text x="439" y="185">3</text><text x="477" y="185">4</text><text x="515" y="185">5</text><text x="553" y="185">6</text><text x="591" y="185">7</text><text x="629" y="185">8</text><text x="667" y="185">9</text><text x="704" y="185">10</text><text x="742" y="185">11</text><text x="780" y="185">12</text><text x="818" y="185">13</text><text transform="translate(225,207) rotate(-90)">2</text><text transform="translate(225,245) rotate(-90)">3</text><text transform="translate(225,282) rotate(-90)">4</text><text transform="translate(225,320) rotate(-90)">5</text><text transform="translate(225,358) rotate(-90)">6</text><text transform="translate(225,396) rotate(-90)">7</text><text transform="translate(225,434) rotate(-90)">8</text><text transform="translate(225,472) rotate(-90)">9</text><text transform="translate(225,514) rotate(-90)">10</text><text transform="translate(225,552) rotate(-90)">11</text><text transform="translate(225,589) rotate(-90)">12</text></svg>
<!--/RULERS-->
<div class="a" style="left:216px;top:176px;width:10px;height:9px;background:#fff;border:1px solid #444;border-radius:2px"></div>
<svg style="left:217px;top:177px" width="8" height="7" viewBox="0 0 8 7"><path d="M1.2 3.5 H6.8 M4 0.8 V6.6" stroke="#000" stroke-width="1.7"/></svg>
<!-- page -->
<div class="a" style="left:228px;top:187px;width:597px;height:402px;background:#ababab"></div>
<div class="a" style="left:323px;top:187px;width:408px;height:402px;background:#fff"></div>
<div class="a" style="left:731px;top:187px;width:5px;height:402px;background:#000"></div>
<!--GRAPH-->
<svg style="left:0;top:0" width="853" height="642" viewBox="0 0 853 642" font-family="Liberation Sans" stroke-width="0">
<text x="514" y="255.5" font-size="9.4" fill="#000" stroke="#000" stroke-width="0.1" textLength="49" lengthAdjust="spacingAndGlyphs">2D Graph 2</text>
<text x="502" y="268" font-size="9.4" fill="#000" stroke="#000" stroke-width="0.1" textLength="48.5" lengthAdjust="spacingAndGlyphs">2D Graph 1</text>
<!-- back graph -->
<rect x="408.5" y="294.5" width="236" height="169" fill="#fff" stroke="#000" stroke-width="1.1"/>
<g stroke="#000" stroke-width="1">
<path d="M404.5 328.6 H408.5 M404.5 362.7 H408.5 M404.5 396.4 H408.5 M404.5 430.2 H408.5"/>
<path d="M407.7 463.7 V468 M455.1 463.7 V468 M503.3 463.7 V468 M550.1 463.7 V468 M597.6 463.7 V468 M644.4 463.7 V468"/>
</g>
<g font-size="6.5" fill="#000" text-anchor="middle" stroke="#000" stroke-width="0.1">
<text x="402.5" y="331.0" text-anchor="end">3</text>
<text x="402.5" y="398.8" text-anchor="end">1</text>
<text x="402.5" y="432.6" text-anchor="end">a</text>
<text x="407.7" y="476">0</text><text x="455.1" y="476">1</text><text x="503.3" y="476">2</text><text x="550.1" y="476">3</text><text x="597.6" y="476">4</text><text x="644.4" y="476">5</text>
</g>
<text transform="translate(391,391) rotate(-90)" font-size="7.7" fill="#000" stroke="#000" stroke-width="0.15" textLength="23" lengthAdjust="spacingAndGlyphs">Y Data</text>
<text x="514.7" y="489.8" font-size="7.7" fill="#000" stroke="#000" stroke-width="0.15" textLength="23.3" lengthAdjust="spacingAndGlyphs">X Data</text>
<!-- front graph -->
<rect x="420.5" y="282.5" width="236" height="170" fill="#fff" stroke="#000" stroke-width="1.1"/>
<path d="M467 452 L467 418 L609 316.3 L609 452Z" fill="#c0c0c0"/>
<g stroke="#000" stroke-width="1">
<path d="M416.3 316.3 H420.5 M416.3 350.7 H420.5 M416.3 384.5 H420.5 M416.3 418.2 H420.5"/>
<path d="M467.8 452 V456 M515.3 452 V456 M562.1 452 V456 M609.3 452 V456"/>
</g>
<g font-size="6.5" fill="#000" text-anchor="middle" stroke="#000" stroke-width="0.1">
<text x="414.6" y="318.7" text-anchor="end">9</text>
<text x="414.6" y="353.1" text-anchor="end">8</text>
<text x="414.6" y="386.9" text-anchor="end">7</text>
<text x="414.6" y="420.6" text-anchor="end">c</text>
<text x="467.8" y="464">d</text><text x="515.3" y="464">4</text><text x="562.1" y="464">5</text><text x="609.3" y="464">6</text>
</g>
<text transform="translate(403,379) rotate(-90)" font-size="7.7" fill="#000" stroke="#000" stroke-width="0.15" textLength="23" lengthAdjust="spacingAndGlyphs">Y Data</text>
<text x="526.4" y="477.8" font-size="7.7" fill="#000" stroke="#000" stroke-width="0.15" textLength="23.6" lengthAdjust="spacingAndGlyphs">X Data</text>
<!-- legends -->
<rect x="408.5" y="494.5" width="46" height="16.7" fill="#fff" stroke="#000" stroke-width="1"/>
<path d="M413.4 502.7 H427.3" stroke="#000" stroke-width="1"/>
<circle cx="419.7" cy="502.7" r="1.8" fill="#000"/>
<text x="432.4" y="505" font-size="6" fill="#111" textLength="14" lengthAdjust="spacingAndGlyphs">Col 1</text>
<rect x="420.5" y="482.7" width="71" height="16.8" fill="#fff" stroke="#000" stroke-width="1"/>
<rect x="425" y="488.4" width="16.8" height="4.8" fill="#c0c0c0" stroke="#000" stroke-width="0.6"/>
<text x="444" y="493.3" font-size="6.4" fill="#111" textLength="40.6" lengthAdjust="spacingAndGlyphs">Col 2 vs Col 3</text>
</svg>

<!--/GRAPH-->
<!-- v scroll -->
<div class="a" style="left:825px;top:187px;width:18px;height:402px;background:#efefef"></div>
<svg style="left:830px;top:193px" width="7" height="4"><path d="M0 4 L7 4 L3.5 0Z" fill="#333"/></svg>
<div class="a" style="left:826px;top:381px;width:15px;height:15px;border:1px solid #8f8f8f;border-radius:1px;background:linear-gradient(90deg,#f7f7f7,#ececec 50%,#d8d8d8)"></div>
<svg style="left:830px;top:579px" width="7" height="4"><path d="M0 0 L7 0 L3.5 4Z" fill="#333"/></svg>
<!-- h scroll -->
<div class="a" style="left:228px;top:589px;width:615px;height:18px;background:#efefef"></div>
<svg style="left:234px;top:594px" width="4" height="7"><path d="M4 0 L4 7 L0 3.5Z" fill="#333"/></svg>
<div class="a" style="left:520px;top:590px;width:15px;height:15px;border:1px solid #8f8f8f;border-radius:1px;background:linear-gradient(#f7f7f7,#ececec 50%,#d8d8d8)"></div>
<svg style="left:815px;top:594px" width="4" height="7"><path d="M0 0 L0 7 L4 3.5Z" fill="#333"/></svg>

<div class="a" id="status"></div>
<div class="st" style="left:17px">OVR</div><div class="sl" style="left:46px"></div>
<div class="st" style="left:56px">REC</div><div class="sl" style="left:88px"></div>
<div class="st" style="left:98px">MACRO</div><div class="sl" style="left:150px"></div>
<div class="st" style="left:160px">AUTO</div><div class="sl" style="left:201px"></div>
<div class="st" style="left:211px">CAP</div><div class="sl" style="left:243px"></div>
<div class="st" style="left:253px;color:#222">NUM</div><div class="sl" style="left:291px"></div>
<div class="st" style="left:301px">SCRL</div><div class="sl" style="left:339px"></div>
<div class="st" style="left:348px;color:#222">Position -- X:124.89, Y:39.70</div>
<svg style="left:585px;top:615px" width="12" height="16" viewBox="0 0 12 16"><path d="M3 15 C1 12,0 9,0.8 7.5 C1.5 7,2.5 8,3 9 L3 2.5 C3 1.5,4.5 1.5,4.5 2.5 L4.5 7 L4.5 1.3 C4.5 0.3,6 0.3,6 1.3 L6 7 L6 1.8 C6 0.8,7.5 0.8,7.5 1.8 L7.5 7 L7.5 3 C7.5 2,9 2,9 3 L9 10 C9 13,8 14,7.5 15Z" fill="#fff" stroke="#1a2a9a" stroke-width="1.1"/></svg>
<svg style="left:616px;top:615px" width="17" height="16" viewBox="0 0 17 16"><circle cx="6.5" cy="6.5" r="5.5" fill="#cfe6f8" stroke="#7a8a9a" stroke-width="1.4"/><path d="M10.5 10.5 L15.5 15" stroke="#6a7a8a" stroke-width="2.8" stroke-linecap="round"/></svg>
<div class="st" style="left:651px;color:#222">50%</div>
<svg style="left:694px;top:614px" width="19" height="19" viewBox="0 0 19 19"><circle cx="9.5" cy="9.5" r="7.3" fill="none" stroke="#666" stroke-width="1.1"/><path d="M5.5 9.5 H13.5" stroke="#444" stroke-width="1.2"/></svg>
<div class="a" style="left:718px;top:622px;width:84px;height:1px;background:#a9a9a9"></div>
<svg style="left:724px;top:615px" width="10" height="16" viewBox="0 0 10 16"><path d="M0.5 0.5 H9.5 V11 L5 15.5 L0.5 11Z" fill="#f5f5f5" stroke="#8a8a8a"/></svg>
<svg style="left:810px;top:614px" width="19" height="19" viewBox="0 0 19 19"><circle cx="9.5" cy="9.5" r="7.3" fill="none" stroke="#666" stroke-width="1.1"/><path d="M5.5 9.5 H13.5 M9.5 5.5 V13.5" stroke="#444" stroke-width="1.2"/></svg>
<svg style="left:836px;top:622px" width="9" height="9" viewBox="0 0 9 9"><g fill="#b8b8b8"><rect x="6" y="0" width="2" height="2"/><rect x="3" y="3" width="2" height="2"/><rect x="6" y="3" width="2" height="2"/><rect x="0" y="6" width="2" height="2"/><rect x="3" y="6" width="2" height="2"/><rect x="6" y="6" width="2" height="2"/></g></svg>
</body></html>
